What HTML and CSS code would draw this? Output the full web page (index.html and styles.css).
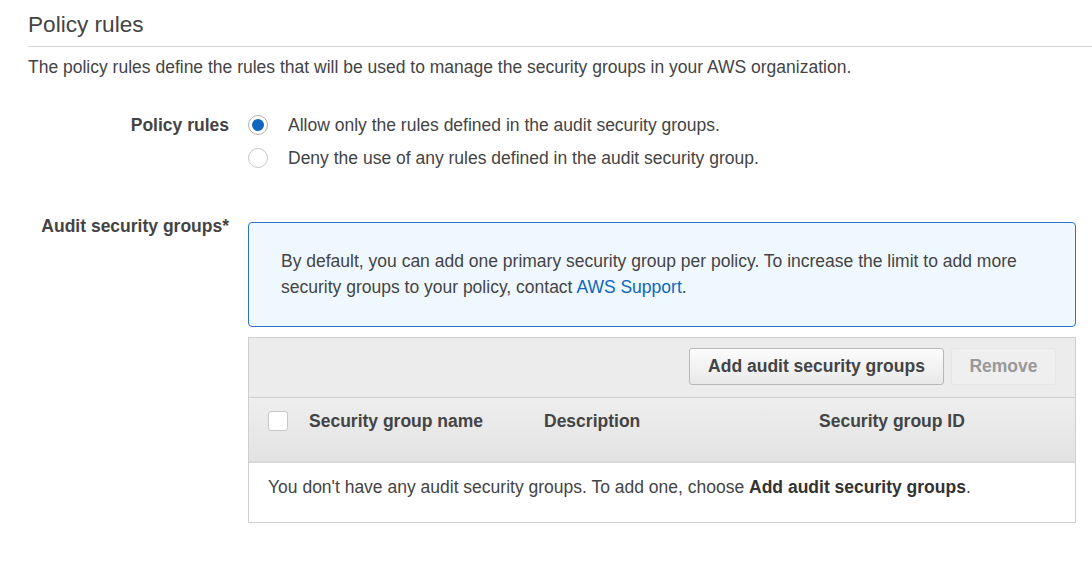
FILE: index.html
```html
<!DOCTYPE html>
<html>
<head>
<meta charset="utf-8">
<link rel="stylesheet" href="styles.css">
</head>
<body>
<div class="page">
  <h2 class="title">Policy rules</h2>
  <p class="intro">The policy rules define the rules that will be used to manage the security groups in your AWS organization.</p>

  <div class="field field-rules">
    <div class="label">Policy rules</div>
    <div class="control">
      <label class="radio-row"><span class="radio checked"></span><span>Allow only the rules defined in the audit security groups.</span></label>
      <label class="radio-row"><span class="radio"></span><span>Deny the use of any rules defined in the audit security group.</span></label>
    </div>
  </div>

  <div class="field field-audit">
    <div class="label label-audit">Audit security groups*</div>
    <div class="control">
      <div class="info">By default, you can add one primary security group per policy. To increase the limit to add more security groups to your policy, contact <a class="link">AWS Support</a>.</div>
      <div class="table">
        <div class="toolbar">
          <button class="btn">Add audit security groups</button>
          <button class="btn disabled">Remove</button>
        </div>
        <div class="thead">
          <div class="col col-check"><span class="checkbox"></span></div>
          <div class="col col-name">Security group name</div>
          <div class="col col-desc">Description</div>
          <div class="col col-id">Security group ID</div>
        </div>
        <div class="empty">You don't have any audit security groups. To add one, choose <b>Add audit security groups</b>.</div>
      </div>
    </div>
  </div>
</div>
</body>
</html>
```

FILE: styles.css
```css
html, body {
  margin: 0;
  padding: 0;
  background: #fff;
}
body {
  font-family: "Liberation Sans", Arial, sans-serif;
  font-size: 17.5px;
  color: #444;
}
.page {
  padding: 11px 0 0 28px;
}
.title {
  margin: 0;
  font-size: 22.6px;
  font-weight: normal;
  line-height: 28px;
  color: #444;
  padding-bottom: 7px;
  border-bottom: 1px solid #d5d5d5;
}
.intro {
  margin: 0;
  padding-top: 10px;
  line-height: 20px;
}
.field {
  display: grid;
  grid-template-columns: 201px 1fr;
  column-gap: 19px;
}
.field-rules {
  margin-top: 38px;
}
.field-audit {
  margin-top: 41px;
  padding-right: 16px;
}
.label {
  text-align: right;
  font-weight: bold;
  line-height: 20px;
  color: #444;
}
.label-audit {
  margin-top: -6px;
}
.control {
  display: flex;
  flex-direction: column;
}
.radio-row {
  display: flex;
  align-items: center;
  gap: 20px;
  height: 20px;
  line-height: 20px;
  margin-bottom: 13px;
}
.radio {
  width: 20px;
  height: 20px;
  box-sizing: border-box;
  border: 1px solid #c8c8c8;
  border-radius: 50%;
  background: #fff;
  display: flex;
  align-items: center;
  justify-content: center;
  flex: none;
}
.radio.checked {
  border-color: #b0b0b0;
}
.radio.checked::after {
  content: "";
  width: 12px;
  height: 12px;
  border-radius: 50%;
  background: #0f66c0;
}
.info {
  border: 1px solid #2a74c2;
  border-radius: 4px;
  background: #f0f8ff;
  padding: 25px 32px 26px 32px;
  line-height: 26px;
  color: #444;
}
.link {
  color: #0f66c0;
  text-decoration: none;
}
.table {
  margin-top: 10px;
  border: 1px solid #cfcfcf;
}
.toolbar {
  background: #ececec;
  display: flex;
  justify-content: flex-end;
  gap: 7px;
  padding: 10px 19px 12px 0;
  border-bottom: 1px solid #d0d0d0;
}
.btn {
  font-family: "Liberation Sans", Arial, sans-serif;
  font-size: 17.5px;
  font-weight: bold;
  color: #444;
  height: 37px;
  padding: 0 18px;
  border: 1px solid #b8b8b8;
  border-radius: 3px;
  background: linear-gradient(#fcfcfc, #e9e9e9);
}
.btn.disabled {
  color: #999;
  border-color: #e6e6e6;
  background: #efefef;
  padding: 0 17.5px;
}
.thead {
  display: flex;
  height: 63px;
  background: linear-gradient(#eeeeee, #e3e3e3);
  border-bottom: 2px solid #d9d9d9;
  font-weight: bold;
  font-size: 17.5px;
  color: #444;
}
.col {
  padding-top: 13px;
  line-height: 20px;
}
.col-check {
  width: 41px;
  padding-left: 19px;
}
.col-name { width: 235px; }
.col-desc { width: 275px; }
.checkbox {
  display: block;
  width: 20px;
  height: 20px;
  box-sizing: border-box;
  border: 1px solid #c8c8c8;
  border-radius: 3px;
  background: #fff;
}
.empty {
  padding: 14px 19px 25px 19px;
  line-height: 20px;
  background: #fff;
}
.empty b {
  color: #333;
}
```
